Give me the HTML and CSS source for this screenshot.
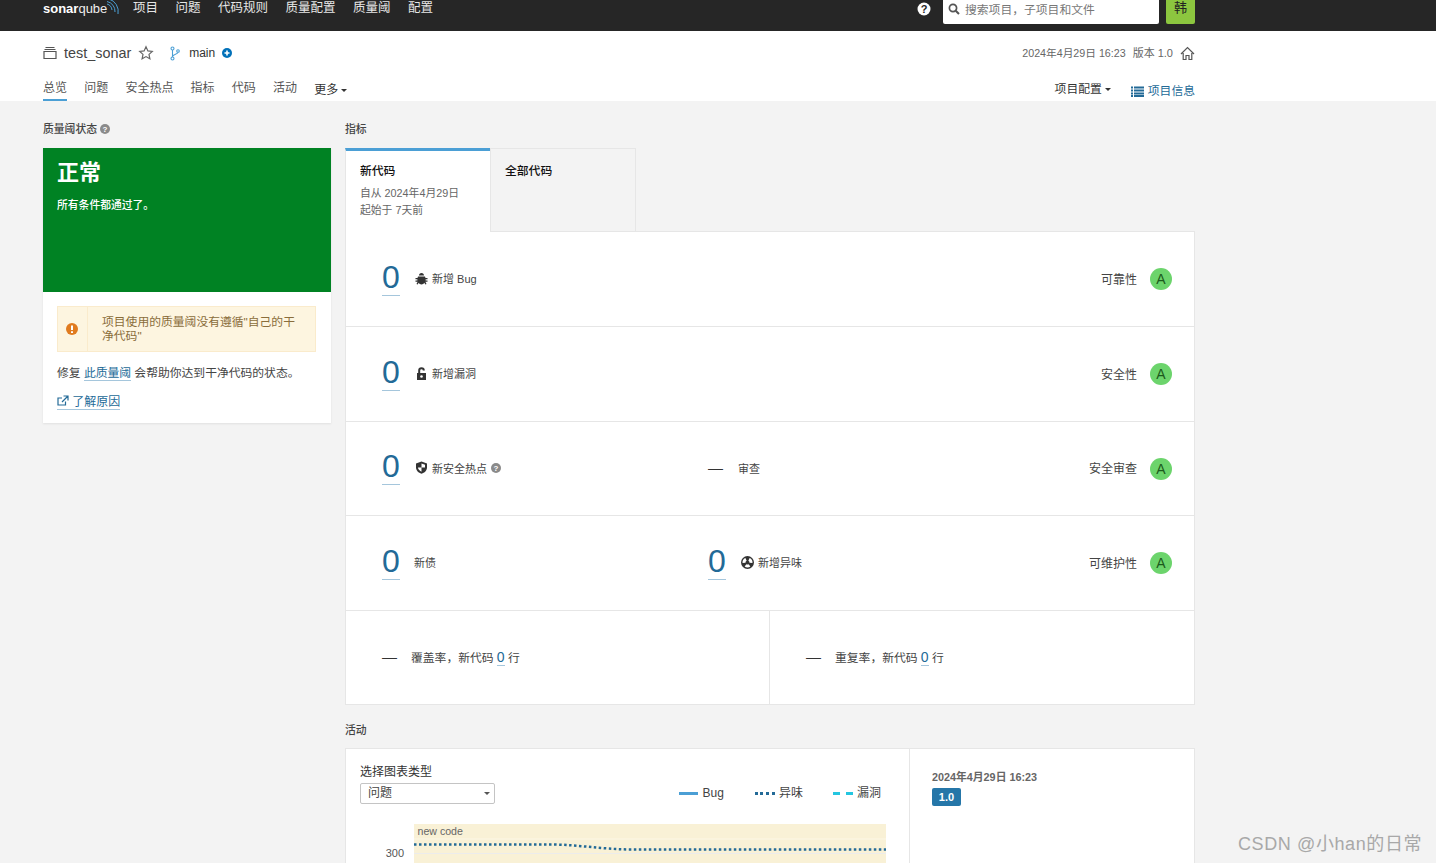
FILE: index.html
```html
<!DOCTYPE html>
<html lang="zh-CN">
<head>
<meta charset="utf-8">
<title>test_sonar</title>
<link rel="stylesheet" href="styles.css">
</head>
<body>
<header class="topbar">
  <div class="wrap topbar-in">
    <div class="logo"><span class="logo-a">sonar</span><span class="logo-b">qube</span>
      <svg class="logo-arcs" width="12" height="16" viewBox="0 0 12 16"><path d="M0 4A7 7 0 0 1 5 10M0 1.500A10 10 0 0 1 8 12M2 -1A13 13 0 0 1 11 14" fill="none" stroke="#4b9fd5" stroke-width="1"/></svg>
    </div>
    <nav class="mainnav"><a>项目</a><a>问题</a><a>代码规则</a><a>质量配置</a><a>质量阈</a><a>配置</a></nav>
    <svg class="help-top" width="14" height="14" viewBox="0 0 14 14"><circle cx="7" cy="7" r="6.500" fill="#fff"/><text x="7" y="11" text-anchor="middle" class="svg-q">?</text></svg>
    <div class="search">
      <svg width="12" height="12" viewBox="0 0 12 12"><circle cx="5" cy="5" r="3.600" fill="none" stroke="#555" stroke-width="1.700"/><path d="M7.700 7.700L11 11" stroke="#555" stroke-width="2"/></svg>
      <span>搜索项目，子项目和文件</span>
    </div>
    <div class="avatar">韩</div>
  </div>
</header>

<section class="subheader">
  <div class="wrap">
    <div class="projrow">
      <svg class="i-proj" width="14" height="14" viewBox="0 0 14 14"><path d="M2.500 1.500H11.500M1.500 3.500H12.500M1 5.500H13V12.500H1Z" fill="none" stroke="#555" stroke-width="1.200"/></svg>
      <span class="projname">test_sonar</span>
      <svg class="i-star" width="16" height="16" viewBox="0 0 16 16"><path d="M8 1.800L9.900 5.900L14.300 6.400L11 9.400L11.900 13.800L8 11.600L4.100 13.800L5 9.400L1.700 6.400L6.100 5.900Z" fill="none" stroke="#666" stroke-width="1.200"/></svg>
      <svg class="i-branch" width="10" height="15" viewBox="0 0 10 15"><g fill="none" stroke="#4b9fd5" stroke-width="1.100"><circle cx="2.500" cy="2.500" r="1.500"/><circle cx="2.500" cy="12.500" r="1.500"/><circle cx="8" cy="5" r="1.300"/><path d="M2.500 4V11M8 6.300C8 8.500 3 8 2.500 10.500"/></g></svg>
      <span class="branch">main</span>
      <svg class="i-plus" width="10" height="10" viewBox="0 0 10 10"><circle cx="5" cy="5" r="5" fill="#0271b9"/><path d="M2.500 5H7.500M5 2.500V7.500" stroke="#fff" stroke-width="1.600"/></svg>
      <div class="meta"><span class="date">2024年4月29日 16:23</span><span class="version">版本 1.0</span>
        <svg width="15" height="15" viewBox="0 0 15 15"><path d="M1 8L7.500 1.500L14 8M3.200 7V13.500H6V9.500H9V13.500H11.800V7" fill="none" stroke="#555" stroke-width="1.200"/></svg>
      </div>
    </div>
    <div class="tabrow">
      <nav class="tabs"><a class="active">总览</a><a>问题</a><a>安全热点</a><a>指标</a><a>代码</a><a>活动</a><a class="more">更多<i class="caret"></i></a></nav>
      <div class="tabright">
        <a class="cfg">项目配置<i class="caret"></i></a>
        <a class="info"><svg width="13" height="11" viewBox="0 0 13 11"><path d="M0 1.500H2M3 1.500H13M0 4.500H2M3 4.500H13M0 7.500H2M3 7.500H13M0 10H2M3 10H13" stroke="#236a97" stroke-width="2"/></svg>项目信息</a>
      </div>
    </div>
  </div>
</section>

<main class="wrap layout">
  <aside class="leftcol">
    <h3 class="sec">质量阈状态 <svg class="i-q" width="10" height="10" viewBox="0 0 10 10"><circle cx="5" cy="5" r="5" fill="#8a8a8a"/><text x="5" y="8" text-anchor="middle" class="svg-q2">?</text></svg></h3>
    <div class="gate">
      <div class="gate-top"><div class="gate-title">正常</div><div class="gate-sub">所有条件都通过了。</div></div>
      <div class="gate-body">
        <div class="warn">
          <div class="warn-icon"><svg width="12" height="12" viewBox="0 0 12 12"><circle cx="6" cy="6" r="6" fill="#e07b1f"/><path d="M6 2.500V7M6 8.300V10" stroke="#fff" stroke-width="2"/></svg></div>
          <div class="warn-text">项目使用的质量阈没有遵循"自己的干净代码"</div>
        </div>
        <p class="fix">修复 <a class="link">此质量阈</a> 会帮助你达到干净代码的状态。</p>
        <p class="learn"><a class="link"><svg width="12" height="11" viewBox="0 0 12 11"><path d="M8.500 6.500V10H1V3H5M6.500 1H11V5.500M11 1L5 7" fill="none" stroke="#236a97" stroke-width="1.200"/></svg> 了解原因</a></p>
      </div>
    </div>
  </aside>

  <section class="rightcol">
    <h3 class="sec">指标</h3>
    <div class="ptabs">
      <div class="ptab on"><div class="ptab-t">新代码</div><div class="ptab-d">自从 2024年4月29日</div><div class="ptab-d">起始于 7天前</div></div>
      <div class="ptab"><div class="ptab-t">全部代码</div></div>
    </div>
    <div class="panel">
      <div class="row">
        <div class="col"><a class="num">0</a>
          <svg class="mi" width="13" height="13" viewBox="0 0 13 13"><path d="M4 3.500C4 2 5 1 6.500 1S9 2 9 3.500ZM3 4.500H10L10.500 6H12.500V7.200H10.600V8.500H12.500V9.700H10.400L11.500 12L10.300 12.500L9.300 10.800C8.700 11.800 7.700 12.500 6.500 12.500S4.300 11.800 3.700 10.800L2.700 12.500L1.500 12L2.600 9.700H.5V8.500H2.400V7.200H.5V6H2.500Z" fill="#333"/></svg>
          <span class="lb">新增 Bug</span></div>
        <div class="rate"><span>可靠性</span><b>A</b></div>
      </div>
      <div class="row">
        <div class="col"><a class="num">0</a>
          <svg class="mi" width="13" height="13" viewBox="0 0 13 13"><path d="M2 6H11V13H2Z" fill="#333"/><path d="M4.200 6.500V3.500C4.200 .5 8.800 .5 8.800 3.500" fill="none" stroke="#333" stroke-width="2"/><circle cx="6.500" cy="9.500" r="1.300" fill="#fff"/></svg>
          <span class="lb">新增漏洞</span></div>
        <div class="rate"><span>安全性</span><b>A</b></div>
      </div>
      <div class="row">
        <div class="col"><a class="num">0</a>
          <svg class="mi" width="13" height="13" viewBox="0 0 13 13"><path d="M6.500 .5L12 2.500V6.500C12 9.500 9.500 11.800 6.500 12.800C3.500 11.800 1 9.500 1 6.500V2.500Z" fill="#333"/><path d="M6.500 2.500V6.500H3C3 8.500 5 10 6.500 10.700V6.500H10V3.800Z" fill="#fff"/></svg>
          <span class="lb">新安全热点</span>
          <svg class="i-q2" width="10" height="10" viewBox="0 0 10 10"><circle cx="5" cy="5" r="5" fill="#8a8a8a"/><text x="5" y="8" text-anchor="middle" class="svg-q2">?</text></svg></div>
        <div class="col col2"><span class="dash">—</span><span class="lb">审查</span></div>
        <div class="rate"><span>安全审查</span><b>A</b></div>
      </div>
      <div class="row">
        <div class="col"><a class="num">0</a><span class="lb plain">新债</span></div>
        <div class="col col2"><a class="num">0</a>
          <svg class="mi" width="13" height="13" viewBox="0 0 13 13"><circle cx="6.500" cy="6.500" r="6.500" fill="#333"/><g fill="#fff"><path d="M3.630 10.600A5 5 0 0 0 9.370 10.600L7.650 8.140A2 2 0 0 1 5.350 8.140Z"/><path d="M3.630 10.600A5 5 0 0 0 9.370 10.600L7.650 8.140A2 2 0 0 1 5.350 8.140Z" transform="rotate(120 6.500 6.500)"/><path d="M3.630 10.600A5 5 0 0 0 9.370 10.600L7.650 8.140A2 2 0 0 1 5.350 8.140Z" transform="rotate(240 6.500 6.500)"/></g></svg>
          <span class="lb">新增异味</span></div>
        <div class="rate"><span>可维护性</span><b>A</b></div>
      </div>
      <div class="row split">
        <div class="half"><span class="dash">—</span><span class="lb">覆盖率，新代码 <a class="mini">0</a> 行</span></div>
        <div class="half"><span class="dash">—</span><span class="lb">重复率，新代码 <a class="mini">0</a> 行</span></div>
      </div>
    </div>

    <h3 class="sec sec-act">活动</h3>
    <div class="activity">
      <div class="act-left">
        <div class="act-head">
          <div class="picker"><div class="picker-l">选择图表类型</div><div class="select">问题<i class="caret small"></i></div></div>
          <div class="legend">
            <span class="lg lg-first"><i class="ln solid"></i>Bug</span>
            <span class="lg lg-tight"><i class="ln dots"></i>异味</span>
            <span class="lg lg-tight"><i class="ln dashes"></i>漏洞</span>
          </div>
        </div>
        <svg class="chart" width="526" height="60" viewBox="0 0 526 60">
          <rect x="54" y="0" width="472" height="60" fill="#f9f1d6"/>
          <path d="M54 15H526" stroke="#fcf7e6"/>
          <path d="M54 29.500H526" stroke="#ececec"/>
          <text x="57.500" y="11" class="c-code">new code</text>
          <text x="44" y="33" text-anchor="end" class="c-y">300</text>
          <path d="M54 20.500H194C220 21 240 25 270 25.500H526" fill="none" stroke="#236a97" stroke-width="2.500" stroke-dasharray="2.500 2.500"/>
        </svg>
      </div>
      <div class="act-right">
        <div class="act-date">2024年4月29日 16:23</div>
        <span class="badge">1.0</span>
      </div>
    </div>
  </section>
</main>

<div class="watermark">CSDN @小han的日常</div>
</body>
</html>
```
FILE: styles.css
```css
* { box-sizing: border-box; }
html, body { margin: 0; height: 863px; overflow: hidden; }
body {
  position: relative;
  background: #f3f3f3;
  color: #333;
  font-family: "Liberation Sans", "Noto Sans CJK SC", sans-serif;
  font-size: 12px;
}
a { color: inherit; text-decoration: none; }
p, h3 { margin: 0; }
.wrap { width: 1152px; margin-left: 43px; }

/* top bar */
.topbar { height: 31px; background: #262626; color: #e6e6e6; }
.topbar-in { display: flex; align-items: flex-start; height: 24px; }
.logo { display: flex; width: 90px; height: 24px; font-size: 13px; line-height: 18px; color: #fff; }
.logo-a { font-weight: 700; }
.logo-b { font-weight: 400; color: #eee; }
.logo-arcs { margin-left: 0; }
.mainnav { display: flex; gap: 17.500px; font-size: 12.500px; line-height: 17px; }
.help-top { margin: 2px 12px 0 auto; }
.svg-q { font: 700 11px "Liberation Sans", sans-serif; fill: #262626; }
.svg-q2 { font: 700 8px "Liberation Sans", sans-serif; fill: #fff; }
.search {
  display: flex; align-items: center; gap: 5px;
  width: 216px; height: 24px; padding: 0 0 7px 5px;
  background: #fff; border-radius: 0 0 2px 2px;
  color: #777; font-size: 11.800px;
}
.avatar {
  width: 29px; height: 24px; margin-left: 7px;
  background: #8cc63f; color: #222; border-radius: 0 0 2px 2px;
  text-align: center; font-size: 13px; line-height: 16px;
}

/* sub header */
.subheader { height: 70px; background: #fff; }
.projrow { display: flex; align-items: center; height: 44px; }
.i-proj { margin-right: 7px; }
.projname { font-size: 14.400px; color: #444; }
.i-star { margin-left: 7px; }
.i-branch { margin-left: 16px; }
.branch { margin-left: 9px; font-size: 12px; color: #333; }
.i-plus { margin-left: 7px; }
.meta { display: flex; align-items: center; margin-left: auto; font-size: 11px; color: #666; }
.date { margin-bottom: 2px; font-size: 10.700px; }
.version { margin: 0 7px 2px 7px; }
.tabrow { display: flex; justify-content: space-between; height: 26px; }
.tabs { display: flex; gap: 17.200px; color: #555; }
.tabs a { height: 26px; padding-top: 5px; line-height: 16px; }
.tabs a.active { color: #555; border-bottom: 2px solid #4b9fd5; }
.tabs a.more { padding-top: 7px; color: #333; }
.caret {
  display: inline-block; width: 0; height: 0; margin-left: 3px; vertical-align: middle;
  border: 3.500px solid transparent; border-top: 3.500px solid #333; border-bottom: 0;
}
.tabright { display: flex; gap: 20px; padding-top: 6px; font-size: 11.800px; line-height: 16px; }
.cfg { color: #333; }
.info { display: flex; align-items: center; gap: 4px; color: #236a97; }

/* layout */
.layout { display: flex; gap: 14px; }
.leftcol { width: 288px; flex: none; }
.rightcol { flex: 1; min-width: 0; }
.sec { display: flex; align-items: center; gap: 3px; height: 16px; margin: 20px 0 11px; font-size: 10.800px; font-weight: 500; line-height: 16px; color: #444; }
.gate { background: #fff; box-shadow: 0 1px 2px rgba(0,0,0,.08); }
.gate-top { height: 144px; padding: 12px 14px; background: #008223; color: #fff; }
.gate-title { font-size: 22px; font-weight: 700; line-height: 26px; }
.gate-sub { margin-top: 11px; font-size: 10.800px; font-weight: 500; line-height: 16px; }
.gate-body { padding: 14px 14px 13px; }
.warn { display: flex; width: 259px; height: 46px; background: #fdf5e0; border: 1px solid #faebcc; color: #8a6d3b; }
.warn-icon { display: flex; align-items: center; justify-content: center; width: 30px; padding-right: 2px; border-right: 1px solid #faebcc; }
.warn-text { flex: 1; padding: 8px 15px 0 14px; font-size: 11.800px; line-height: 14px; }
.fix { margin-top: 13px; font-size: 11.800px; line-height: 16px; color: #444; }
.learn { margin-top: 13px; line-height: 16px; }
.link { color: #236a97; border-bottom: 1px solid #a5c6dc; }

/* tabs + panel */
.ptabs { display: flex; height: 83px; }
.ptab { width: 146px; padding: 14px 14px 0; border: 1px solid #e6e6e6; border-bottom: 0; }
.ptab-t { font-size: 11.800px; font-weight: 500; line-height: 16px; color: #111; }
.ptab.on { width: 145px; position: relative; z-index: 1; height: 84px; padding-top: 12px; padding-left: 14px; background: #fff; border-top: 3px solid #4b9fd5; border-right: 0; border-left: 1px solid #e6e6e6; }
.ptab.on .ptab-t { margin-bottom: 6px; }
.ptab-d { font-size: 10.800px; line-height: 17px; color: #666; }
.panel { display: grid; grid-template-rows: 95px 95px 94px 95px 93px; height: 474px; background: #fff; border: 1px solid #e6e6e6; }
.row { display: flex; align-items: center; padding: 0 23px 0 36px; border-bottom: 1px solid #e6e6e6; }
.row.split { padding: 0; border-bottom: 0; align-items: stretch; }
.col { display: flex; align-items: center; width: 326px; }
.col2 { width: auto; }
.num { width: 18px; height: 33px; border-bottom: 1px solid #a5c6dc; color: #236a97; font-size: 32px; line-height: 29px; text-align: center; }
.mi { margin: 0 4px 2px 15px; }
.lb { margin-bottom: 2px; font-size: 11px; color: #444; }
.lb.plain { margin-left: 14px; }
.i-q2 { margin: 0 0 2px 4px; }
.dash { width: 30px; margin-bottom: 2px; font-size: 15px; color: #333; }
.rate { display: flex; align-items: center; gap: 13px; margin-left: auto; color: #444; }
.rate span { margin-bottom: 2px; }
.rate b { width: 22px; height: 22px; border-radius: 50%; background: #6cd46c; color: #1c5a1c; font-size: 14px; font-weight: 400; line-height: 22px; text-align: center; }
.half { display: flex; align-items: center; flex: none; width: 424px; padding: 0 0 2px 36px; }
.half:first-child { width: 423px; }
.half + .half { border-left: 1px solid #e6e6e6; width: 426px; }
.half .dash { width: 29px; margin-bottom: 0; }
.half .lb { margin-bottom: 0; font-size: 11.800px; }
.mini { color: #236a97; border-bottom: 1px solid #a5c6dc; font-size: 14px; }

/* activity */
.sec-act { margin: 17px 0 10px; }
.activity { display: flex; height: 300px; background: #fff; border: 1px solid #e6e6e6; }
.act-left { width: 564px; padding: 15px 14px 0; border-right: 1px solid #e6e6e6; }
.act-head { display: flex; justify-content: space-between; height: 60px; }
.picker-l { line-height: 16px; color: #333; }
.select { position: relative; width: 135px; height: 21px; margin-top: 3px; padding-left: 7px; border: 1px solid #c4c4c4; border-radius: 2px; line-height: 19px; color: #444; }
.caret.small { position: absolute; right: 4px; top: 8px; border-width: 3px; border-top-width: 3px; border-top-color: #555; }
.legend { display: flex; gap: 30px; padding: 21px 14px 0 0; line-height: 16px; color: #444; }
.lg { display: flex; align-items: center; gap: 5px; height: 16px; }
.lg-first { margin-right: 1px; }
.lg-tight { gap: 4px; }
.ln { display: block; width: 19px; height: 0; border-top: 3px solid #4b9fd5; }
.ln.dots { width: 20px; border-top: 3px dotted #236a97; }
.ln.dashes { width: 20px; border: 0; height: 3px; background: linear-gradient(90deg, #24c6e0 7px, transparent 7px 13px, #24c6e0 13px); }
.chart { display: block; }
.c-code { font: 10.600px "Liberation Sans", sans-serif; fill: #666; }
.c-y { font: 11px "Liberation Sans", sans-serif; fill: #555; }
.act-right { flex: 1; padding: 21px 22px; }
.act-date { font-size: 10.800px; font-weight: 700; line-height: 14px; color: #666; }
.badge { display: inline-block; width: 29px; height: 18px; margin-top: 4px; border-radius: 2px; background: #2576a8; color: #fff; font-size: 11px; font-weight: 700; line-height: 18px; text-align: center; }

.watermark { position: absolute; left: 1238px; top: 831px; font-size: 18px; letter-spacing: .6px; line-height: 26px; color: #a8a8a8; white-space: nowrap; }
```
